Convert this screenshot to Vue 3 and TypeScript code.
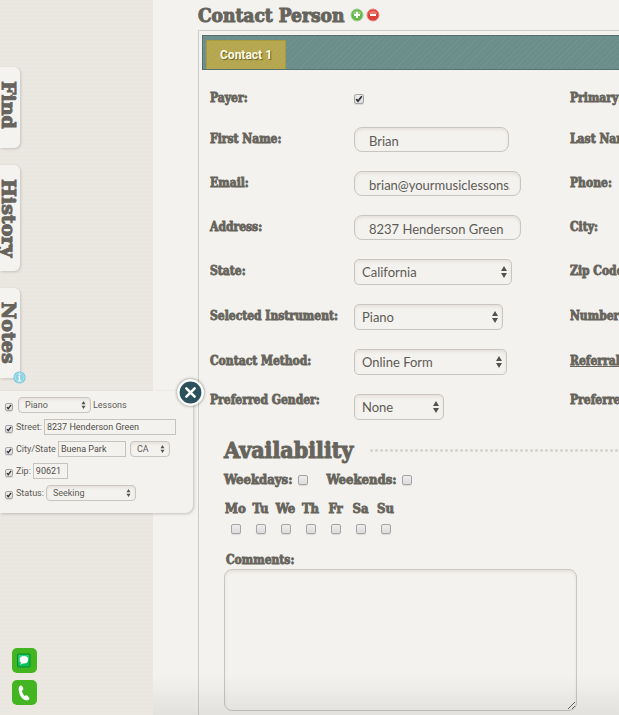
<script setup lang="ts">
import { reactive, ref } from 'vue'

interface Field {
  id: string
  label: string
  kind: 'text' | 'select'
  size: string
  nextLabel: string
  nextId: string
  options?: string[]
}

const fields: Field[] = [
  { id: 'first', label: 'First Name:', kind: 'text', size: 'w-name', nextLabel: 'Last Name:', nextId: 'last' },
  { id: 'email', label: 'Email:', kind: 'text', size: 'w-long', nextLabel: 'Phone:', nextId: 'phone' },
  { id: 'address', label: 'Address:', kind: 'text', size: 'w-long', nextLabel: 'City:', nextId: 'city' },
  { id: 'state', label: 'State:', kind: 'select', size: 'w-state', nextLabel: 'Zip Code:', nextId: 'zip', options: ['California', 'Nevada', 'Oregon'] },
  { id: 'instrument', label: 'Selected Instrument:', kind: 'select', size: 'w-instrument', nextLabel: 'Number of Students:', nextId: 'number', options: ['Piano', 'Guitar', 'Violin'] },
  { id: 'method', label: 'Contact Method:', kind: 'select', size: 'w-method', nextLabel: 'Referral:', nextId: 'referral', options: ['Online Form', 'Phone', 'Email'] },
  { id: 'gender', label: 'Preferred Gender:', kind: 'select', size: 'w-gender', nextLabel: 'Preferred Age:', nextId: 'age', options: ['None', 'Female', 'Male'] },
]

const values = reactive<Record<string, string>>({
  first: 'Brian',
  email: 'brian@yourmusiclessons.com',
  address: '8237 Henderson Green',
  state: 'California',
  instrument: 'Piano',
  method: 'Online Form',
  gender: 'None',
})

const payer = ref(true)
const weekdays = ref(false)
const weekends = ref(false)
const days = ['Mo', 'Tu', 'We', 'Th', 'Fr', 'Sa', 'Su']
const chosenDays = ref<string[]>([])
const comments = ref('')

const filter = reactive({
  lessons: true, instrument: 'Piano',
  streetOn: true, street: '8237 Henderson Green',
  cityOn: true, city: 'Buena Park', state: 'CA',
  zipOn: true, zip: '90621',
  statusOn: true, status: 'Seeking',
})
</script>

<template>
  <div class="page">
    <aside class="rail">
      <nav class="tabs">
        <button type="button" class="tab">Find</button>
        <button type="button" class="tab">History</button>
        <button type="button" class="tab">Notes
          <svg class="info" viewBox="0 0 14 14" aria-hidden="true">
            <circle cx="7" cy="7" r="6.5" fill="#6cc3db" />
            <circle cx="7" cy="7" r="5" fill="#8ad3e5" stroke="#bfe8f1" />
            <path d="M7 6v4.5M5.8 6.2H7M5.5 10.4h3" stroke="#f3fbfd" stroke-width="1.4" />
            <circle cx="7" cy="3.8" r="1" fill="#f3fbfd" />
          </svg>
        </button>
      </nav>
      <div class="quick">
        <button type="button" class="quick-btn" aria-label="Message">
          <svg viewBox="0 0 25 25">
            <rect x="5.5" y="6" width="12.5" height="13" rx="1" fill="#09c057" stroke="#078a32" />
            <path d="M6.500 7h10.500v5c-4-1-7 0-10.500 3z" fill="#52d98c" opacity=".6" />
            <path d="M12 8c-2.600 0-4.300 1.600-4.300 3.700 0 1.100.5 2 1.300 2.700-.1.900-.5 1.500-1.200 2 1.300 0 2.300-.4 3-1 .4.100.8.100 1.200.100 2.500 0 4.200-1.700 4.200-3.800S14.500 8 12 8z" fill="#fff" />
          </svg>
        </button>
        <button type="button" class="quick-btn" aria-label="Call">
          <svg viewBox="0 0 25 25">
            <path d="M8 5.800c.8-.5 1.800-.4 2.300.5l.9 2c.3.800.1 1.400-.5 1.900l-.8.600c.3 1.900 1.400 3.800 2.800 5.100l1-.4c.8-.3 1.400-.1 1.900.5l1.400 1.500c.6.800.5 1.600-.3 2.200-1.600 1.300-3.800 1-5.700-.6C8.600 17 6.900 13.600 6.700 9.800 6.600 8 7 6.500 8 5.800z" fill="#fff" />
          </svg>
        </button>
      </div>
    </aside>

    <main class="main">
      <header class="title">
        <h1>Contact Person</h1>
        <button type="button" class="round" aria-label="Add contact">
          <svg viewBox="0 0 14 14">
            <circle cx="7" cy="7" r="6" fill="#65b84b" stroke="#a2cf92" />
            <path d="M2.500 6a4.700 4.700 0 0 1 9 0z" fill="#91cf7d" />
            <path d="M7 4v6M4 7h6" stroke="#fff" stroke-width="2" />
          </svg>
        </button>
        <button type="button" class="round" aria-label="Remove contact">
          <svg viewBox="0 0 14 14">
            <circle cx="7" cy="7" r="6" fill="#dc4038" stroke="#eb8a83" />
            <path d="M2.500 6a4.700 4.700 0 0 1 9 0z" fill="#ea756d" />
            <path d="M4 7h6" stroke="#fff" stroke-width="2" />
          </svg>
        </button>
      </header>

      <section class="frame">
        <div class="bar">
          <button type="button" class="bar-tab">Contact 1</button>
        </div>

        <form class="form" @submit.prevent>
          <div class="row">
            <label for="payer">Payer:</label>
            <div><input id="payer" v-model="payer" type="checkbox" class="check" /></div>
            <span class="next">Primary:</span>
          </div>
          <div v-for="f in fields" :key="f.id" class="row" :class="{ last: f.id === 'gender' }">
            <label :for="f.id">{{ f.label }}</label>
            <input v-if="f.kind === 'text'" :id="f.id" v-model="values[f.id]" type="text" class="text" :class="f.size" />
            <select v-else :id="f.id" v-model="values[f.id]" class="select" :class="f.size">
              <option v-for="o in f.options" :key="o">{{ o }}</option>
            </select>
            <a v-if="f.nextId === 'referral'" href="#" class="next">{{ f.nextLabel }}</a>
            <span v-else class="next">{{ f.nextLabel }}</span>
          </div>

          <div class="avail">
            <div class="avail-head">
              <h2>Availability</h2>
              <span class="dots"></span>
            </div>
            <div class="week">
              <label>Weekdays: <input v-model="weekdays" type="checkbox" class="check" /></label>
              <label>Weekends: <input v-model="weekends" type="checkbox" class="check" /></label>
            </div>
            <div class="days">
              <label v-for="d in days" :key="d">
                {{ d }}
                <input v-model="chosenDays" type="checkbox" class="check" :value="d" />
              </label>
            </div>
            <label class="comments-label" for="comments">Comments:</label>
            <textarea id="comments" v-model="comments" class="comments"></textarea>
          </div>
        </form>
      </section>
    </main>

    <aside class="panel">
      <button type="button" class="close" aria-label="Close">
        <svg viewBox="0 0 26 26">
          <circle cx="13" cy="13" r="11.500" fill="#2b525c" stroke="#fff" stroke-width="2" />
          <path d="M9 9l8 8M17 9l-8 8" stroke="#fff" stroke-width="2.400" stroke-linecap="round" />
        </svg>
      </button>
      <div class="line">
        <input id="f-lessons" v-model="filter.lessons" type="checkbox" class="check small" aria-label="Lessons filter" />
        <select id="f-instrument" v-model="filter.instrument" class="select mini m-instrument">
          <option>Piano</option><option>Guitar</option>
        </select>
        <label for="f-instrument">Lessons</label>
      </div>
      <div class="line">
        <input v-model="filter.streetOn" type="checkbox" class="check small" aria-label="Street filter" />
        <label for="f-street">Street:</label>
        <input id="f-street" v-model="filter.street" type="text" class="mini-text m-street" />
      </div>
      <div class="line">
        <input v-model="filter.cityOn" type="checkbox" class="check small" aria-label="City filter" />
        <label for="f-city">City/State</label>
        <input id="f-city" v-model="filter.city" type="text" class="mini-text m-city" />
        <select v-model="filter.state" class="select mini m-state" aria-label="State">
          <option>CA</option><option>NV</option>
        </select>
      </div>
      <div class="line">
        <input v-model="filter.zipOn" type="checkbox" class="check small" aria-label="Zip filter" />
        <label for="f-zip">Zip:</label>
        <input id="f-zip" v-model="filter.zip" type="text" class="mini-text m-zip" />
      </div>
      <div class="line">
        <input v-model="filter.statusOn" type="checkbox" class="check small" aria-label="Status filter" />
        <label for="f-status">Status:</label>
        <select id="f-status" v-model="filter.status" class="select mini m-status">
          <option>Seeking</option><option>Matched</option>
        </select>
      </div>
    </aside>
    <div class="fade"></div>
  </div>
</template>

<style>
body {
  background: #f4f2ee;
}
</style>

<style scoped>
* {
  box-sizing: border-box;
}
.page {
  position: relative;
  display: flex;
  min-height: 100vh;
  overflow: hidden;
  color: #5d5b56;
  background: #f4f2ee;
  font-family: Roboto, "Liberation Sans", sans-serif;
  font-size: 13px;
}
button {
  border: 0;
  padding: 0;
  background: none;
  color: inherit;
  cursor: pointer;
}
svg {
  display: block;
}
.rail {
  flex: 0 0 153px;
  display: flex;
  flex-direction: column;
  background: repeating-linear-gradient(0deg, #ebe8e1 0 2px, #eae7e0 2px 4px);
}
.tabs {
  display: flex;
  flex-direction: column;
  align-items: flex-start;
  gap: 17px;
  padding-top: 67px;
}
.tab {
  position: relative;
  width: 20px;
  min-height: 81px;
  padding: 14px 2px 14px 0;
  border-radius: 0 6px 6px 0;
  background: #f5f3ef;
  box-shadow: 1px 1px 3px rgba(0, 0, 0, 0.16);
  color: #66645c;
  font: bold 19px/18px "DejaVu Serif", serif;
  text-align: left;
  writing-mode: vertical-rl;
  -webkit-text-stroke: 1px #66645c;
}
.info {
  position: absolute;
  right: -6px;
  bottom: -6px;
  width: 13px;
  height: 13px;
}
.quick {
  display: flex;
  flex-direction: column;
  gap: 7px;
  margin-top: auto;
  padding: 0 0 10px 12px;
}
.quick-btn {
  width: 25px;
  height: 25px;
  border-radius: 5px;
  background: #42b521;
}
.main {
  flex: 1;
  min-width: 0;
  display: flex;
  flex-direction: column;
  padding-left: 45px;
}
.title {
  display: flex;
  align-items: center;
  gap: 2px;
  height: 30px;
}
h1,
h2 {
  margin: 0;
  color: #66645c;
  font: bold 23px/28px "DejaVu Serif Condensed", "DejaVu Serif", serif;
  white-space: nowrap;
  -webkit-text-stroke: 1px #66645c;
}
h1 {
  margin-right: 4px;
}
.round {
  width: 14px;
  height: 14px;
}
.frame {
  flex: 1;
  padding: 4px 0 0 3px;
  border: 1px solid #cfcdc8;
  border-width: 1px 0 0 1px;
  overflow: hidden;
}
.bar {
  display: flex;
  align-items: flex-end;
  height: 35px;
  padding-left: 3px;
  border: 1px solid #54716e;
  border-right: 0;
  background: repeating-linear-gradient(135deg, #6c8e8b 0 3px, #71928f 3px 4px);
}
.bar-tab {
  height: 29px;
  padding: 0 13px;
  border: 1px solid #a99a3e;
  border-bottom: 0;
  background: repeating-linear-gradient(135deg, #b5a750 0 3px, #b8aa54 3px 4px);
  color: #fdfbe6;
  font: bold 12px/26px Roboto, sans-serif;
  text-shadow: 1px 1px 1px rgba(70, 65, 20, 0.7);
}
.form {
  display: flex;
  flex-direction: column;
  gap: 19px;
  padding: 16px 0 0 8px;
}
.row {
  display: grid;
  grid-template-columns: 144px 216px 1fr;
  align-items: start;
}
label,
.next {
  white-space: nowrap;
}
.form label,
.next {
  color: #66645c;
  font: bold 12px/24px "DejaVu Serif Condensed", "DejaVu Serif", serif;
  -webkit-text-stroke: 0.8px #66645c;
}
.row:first-child {
  height: 22px;
}
.row:first-child > div {
  padding-top: 8px;
}
.row.last label,
.row.last .next {
  line-height: 12px;
}
.check {
  appearance: none;
  display: block;
  flex: none;
  width: 10px;
  height: 10px;
  margin: 0;
  border: 1px solid #a5a5a5;
  border-radius: 2px;
  background: linear-gradient(#ededed, #dcdcdc);
  box-shadow: 0 1px 1px rgba(0, 0, 0, 0.1);
}
.check:checked {
  background: url("data:image/svg+xml,%3Csvg xmlns='http://www.w3.org/2000/svg' viewBox='0 0 8 8'%3E%3Cpath d='M1.200 4.200 3 6.200 6.800 1.200' fill='none' stroke='%23333' stroke-width='1.800'/%3E%3C/svg%3E") center / 100% no-repeat, linear-gradient(#ededed, #dcdcdc);
}
.check.small {
  width: 8px;
  height: 8px;
  margin: 4px 1px 0 0;
}
.text,
.select,
.comments {
  border: 1px solid #c9c6c2;
  border-radius: 6px;
  background-color: #f4f2ee;
  box-shadow: inset 0 2px 3px rgba(120, 90, 80, 0.1);
  color: #5d5b56;
  font: 13px Lato, sans-serif;
  outline: none;
}
.text {
  height: 25px;
  padding: 2px 10px 0 14px;
  border-radius: 8px;
}
.select {
  appearance: none;
  height: 26px;
  padding: 0 16px 0 7px;
  border-radius: 5px;
  background-image: url("data:image/svg+xml,%3Csvg xmlns='http://www.w3.org/2000/svg' viewBox='0 0 6 12'%3E%3Cpath d='M0 5 3 0 6 5zM0 7 3 12 6 7z' fill='%2355534e'/%3E%3C/svg%3E");
  background-repeat: no-repeat;
  background-position: right 4px center;
  background-size: 6px 12px;
}
.w-name { width: 155px; }
.w-long { width: 167px; }
.w-state { width: 158px; }
.w-instrument { width: 149px; }
.w-method { width: 153px; }
.w-gender { width: 90px; }
.title h1 {
  font-size: 19px;
}
.avail {
  display: flex;
  flex-direction: column;
  padding-left: 14px;
}
.avail-head {
  display: flex;
  align-items: center;
  gap: 16px;
  margin-top: -3px;
}
.dots {
  flex: 1;
  height: 3px;
  background: radial-gradient(circle, #d8d5d0 0 1px, transparent 2px) 0 0 / 5px 3px repeat-x;
}
.week {
  display: flex;
  gap: 19px;
  margin-top: 4px;
}
.form .week label,
.form .days label {
  font-size: 13px;
}
.week label {
  display: flex;
  align-items: center;
  gap: 5px;
}
.days {
  display: grid;
  grid-template-columns: repeat(7, 25px);
  margin: 5px 0 0 -1px;
}
.days label {
  display: flex;
  flex-direction: column;
  align-items: center;
  gap: 3px;
}
.form .comments-label {
  margin-top: 17px;
  padding-left: 2px;
  line-height: 18px;
}
.comments {
  width: 353px;
  max-width: 100%;
  height: 142px;
  padding: 8px;
  border-radius: 8px;
  resize: both;
}
.panel {
  position: absolute;
  top: 391px;
  left: 0;
  width: 193px;
  display: flex;
  flex-direction: column;
  gap: 6px;
  padding: 6px 5px 12px;
  border-radius: 0 0 8px 0;
  background: #f4f2ee;
  box-shadow: 1px 1px 3px rgba(0, 0, 0, 0.2);
  font-size: 9px;
  line-height: 16px;
}
.line {
  display: flex;
  align-items: center;
  gap: 2px;
  height: 16px;
}
.mini {
  height: 16px;
  padding: 0 12px 0 6px;
  border-radius: 4px;
  background-size: 5px 8px;
  font: 9px Roboto, sans-serif;
}
.mini-text {
  height: 16px;
  padding: 0 2px;
  border: 1px solid #c6c3bf;
  border-radius: 0;
  background: #f4f2ee;
  color: #4f4d49;
  font: 9px Roboto, sans-serif;
}
.m-instrument { width: 73px; margin-left: 2px; }
.m-street { width: 132px; }
.m-city { width: 68px; }
.m-state { width: 40px; margin-left: 2px; }
.m-zip { width: 35px; }
.m-status { width: 90px; }
.close {
  position: absolute;
  top: -12px;
  right: -11px;
  width: 27px;
  height: 27px;
  border-radius: 50%;
  box-shadow: 0 0 3px rgba(0, 0, 0, 0.5);
}
.fade {
  position: absolute;
  right: 0;
  bottom: 0;
  left: 153px;
  height: 40px;
  background: linear-gradient(rgba(0, 0, 0, 0), rgba(0, 0, 0, 0.07));
  pointer-events: none;
}
</style>
